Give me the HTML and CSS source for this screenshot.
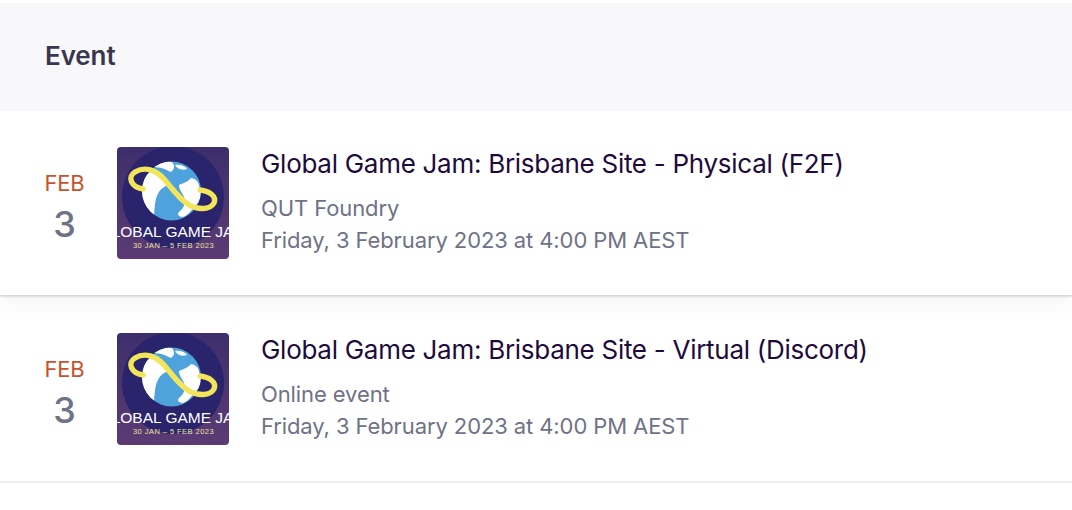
FILE: index.html
```html
<!DOCTYPE html>
<html lang="en">
<head>
<meta charset="utf-8">
<title>Events</title>
<link rel="stylesheet" href="styles.css">
</head>
<body>
<svg class="defs" width="0" height="0" aria-hidden="true">
  <defs>
    <linearGradient id="bg" x1="0" y1="0" x2="0" y2="1">
      <stop offset="0" stop-color="#3d2f6c"/>
      <stop offset="1" stop-color="#5c3b74"/>
    </linearGradient>
    <clipPath id="land">
      <circle cx="54.500" cy="44" r="29.500"/>
    </clipPath>
    <symbol id="logo" viewBox="0 0 112 112">
      <rect width="112" height="112" fill="url(#bg)"/>
      <circle cx="56" cy="50" r="51" fill="#29246b"/>
      <circle cx="54.500" cy="44" r="29.500" fill="#4fa3dc"/>
      <g clip-path="url(#land)" fill="#fff">
        <path d="M24 42 C26 30 32 24 38 23 C44 26 50 32 52 37 C47 40 43 42 41 47 C38 52 38 58 37 68 C30 64 24 52 24 42Z"/>
        <path d="M37 20 C44 14 52 13 56 16 C58 20 57 23 54 25 C50 23 44 20 37 20Z"/>
        <path d="M62 38 C66 36 71 35 74 31 C79 32 82 35 82 39 C85 45 84 52 80 57 C76 61 72 68 66 70 C61 70 60 67 62 65 C66 62 68 58 68 53 C67 47 62 44 62 38Z"/>
        <path d="M58 18 C63 17 68 19 70 22 C66 24 60 22 58 18Z"/>
      </g>
      <path d="M26 42 C14 40 10 30 18 25 C28 19 39 23 47 32 C54 40 62 52 72 58 C81 63 93 63 97 56 C100 49 92 44 83 43" fill="none" stroke="#f3e55a" stroke-width="5.400" stroke-linecap="round"/>
      <text class="logo-title" x="56" y="89.500" text-anchor="middle">GLOBAL GAME JAM</text>
      <text class="logo-date" x="56.500" y="100.500" text-anchor="middle">30 JAN – 5 FEB 2023</text>
    </symbol>
  </defs>
</svg>
<main class="table">
  <header class="table-head">Event</header>
  <article class="row row-first">
    <div class="date"><span class="month">FEB</span><span class="day">3</span></div>
    <svg class="thumb" viewBox="0 0 112 112" role="img" aria-label="Global Game Jam logo"><use href="#logo"/></svg>
    <div class="info">
      <h2 class="title">Global Game Jam: Brisbane Site - Physical (F2F)</h2>
      <p class="meta meta-place">QUT Foundry</p>
      <p class="meta">Friday, 3 February 2023 at 4:00 PM AEST</p>
    </div>
  </article>
  <article class="row row-second">
    <div class="date"><span class="month">FEB</span><span class="day">3</span></div>
    <svg class="thumb" viewBox="0 0 112 112" role="img" aria-label="Global Game Jam logo"><use href="#logo"/></svg>
    <div class="info">
      <h2 class="title">Global Game Jam: Brisbane Site - Virtual (Discord)</h2>
      <p class="meta meta-place">Online event</p>
      <p class="meta">Friday, 3 February 2023 at 4:00 PM AEST</p>
    </div>
  </article>
</main>
</body>
</html>
```
FILE: styles.css
```css
* { box-sizing: border-box; }
html, body { margin: 0; padding: 0; background: #fff; }
body { font-family: "Inter", "Liberation Sans", sans-serif; overflow: hidden; height: 510px; }
.defs { display: block; height: 0; }
.table { padding-top: 3px; }
.table-head {
  position: relative;
  z-index: 2;
  height: 108px;
  background: #f8f8fa;
  padding: 0 45px 4px;
  display: flex;
  align-items: center;
  font-size: 26px;
  font-weight: 600;
  letter-spacing: -0.1px;
  color: #39364f;
}
.row {
  display: flex;
  align-items: flex-start;
  background: #fff;
}
.row-first {
  height: 184px;
  padding-top: 36px;
  position: relative;
  z-index: 1;
  box-shadow: 0 1px 3px rgba(57, 54, 79, .28), 0 8px 24px rgba(57, 54, 79, .05);
}
.row-second {
  height: 188px;
  padding-top: 38px;
  border-bottom: 2px solid #eeedf2;
}
.date {
  padding-top: 23px;
  display: flex;
  flex-direction: column;
  align-items: center;
  width: 129px;
  margin-right: -12px;
}
.month { font-size: 22px; line-height: 26px; color: #c5532d; letter-spacing: -0.2px; }
.day { font-size: 36px; line-height: 44px; font-weight: 500; color: #6f7287; margin-top: 6px; }
.thumb { width: 112px; height: 112px; border-radius: 4px; flex: none; display: block; }
.logo-title { font-family: "Liberation Sans", sans-serif; font-size: 15.500px; fill: #fff; }
.logo-date { font-family: "Liberation Sans", sans-serif; font-size: 7.500px; letter-spacing: 0.45px; fill: #efe6a0; }
.info { margin-left: 32px; margin-top: -1px; }
.title { margin: 0 0 10px; font-size: 26px; line-height: 36px; font-weight: 400; letter-spacing: -0.28px; color: #1e0a3c; white-space: nowrap; }
.meta { margin: 0; font-size: 22px; line-height: 32px; letter-spacing: -0.1px; color: #6f7287; white-space: nowrap; }
```
